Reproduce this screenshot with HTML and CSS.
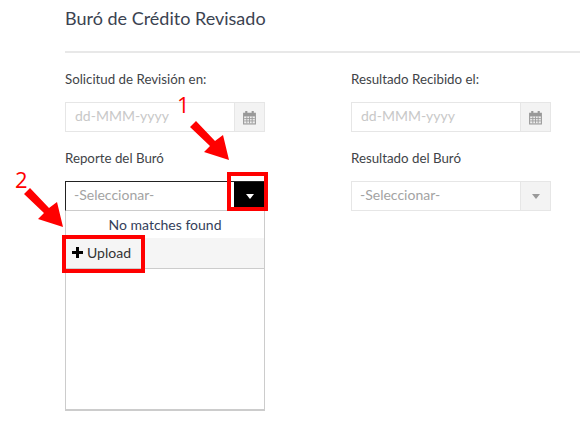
FILE: index.html
```html
<!DOCTYPE html>
<html>
<head>
  <meta charset="utf-8">
  <title>Buró de Crédito Revisado</title>
  <link rel="stylesheet" href="styles.css">
</head>
<body>
  <div class="page">
    <h1>Buró de Crédito Revisado</h1>
    <div class="form-grid">
      <div class="field">
        <label>Solicitud de Revisión en:</label>
        <div class="input-group">
          <span class="control placeholder">dd-MMM-yyyy</span>
          <span class="addon">
            <svg class="cal" viewBox="0 0 14 14"><path d="M1 2.5h2V1h2v1.5h4V1h2v1.500h2V13.500H1z" fill="#999"/><path d="M2 6h10v6.500H2z" fill="#eee"/><path d="M2 8h10M2 10.200h10M4.500 6v6.500M7 6v6.500M9.500 6v6.500" stroke="#999" stroke-width=".8" fill="none"/></svg>
          </span>
        </div>
      </div>
      <div class="field">
        <label>Resultado Recibido el:</label>
        <div class="input-group">
          <span class="control placeholder">dd-MMM-yyyy</span>
          <span class="addon">
            <svg class="cal" viewBox="0 0 14 14"><path d="M1 2.5h2V1h2v1.5h4V1h2v1.500h2V13.500H1z" fill="#999"/><path d="M2 6h10v6.500H2z" fill="#eee"/><path d="M2 8h10M2 10.200h10M4.500 6v6.500M7 6v6.500M9.500 6v6.500" stroke="#999" stroke-width=".8" fill="none"/></svg>
          </span>
        </div>
      </div>
      <div class="field">
        <label>Reporte del Buró</label>
        <div class="select-wrap">
          <div class="input-group open">
            <span class="control placeholder-dark">-Seleccionar-</span>
            <span class="addon black"><i class="caret white"></i></span>
          </div>
          <div class="dropdown">
            <div class="no-match">No matches found</div>
            <div class="upload">
              <svg class="plus" viewBox="0 0 11 11"><path d="M4 0h3v4h4v3H7v4H4V7H0V4h4z" fill="#000"/></svg>
              Upload
            </div>
          </div>
        </div>
      </div>
      <div class="field">
        <label>Resultado del Buró</label>
        <div class="input-group">
          <span class="control placeholder-dark">-Seleccionar-</span>
          <span class="addon"><i class="caret"></i></span>
        </div>
      </div>
    </div>
  </div>

  <!-- anotaciones en rojo sobre la captura -->
  <span class="num num-1">1</span>
  <span class="num num-2">2</span>
  <div class="red-box box-1"></div>
  <div class="red-box box-2"></div>
  <svg class="arrows" viewBox="0 0 580 436">
    <polygon points="190,127 196,121 215,141 223,135 229,160 204,152 210,146" fill="#f00"/>
    <polygon points="24,194 30,188 49,208 57,202 63,227 38,219 44,213" fill="#f00"/>
  </svg>
</body>
</html>
```

FILE: styles.css
```css
* {
  margin: 0;
  padding: 0;
  box-sizing: border-box;
}

body {
  font-family: 'Lato', 'Liberation Sans', sans-serif;
  background: #fff;
  color: #3b4351;
  width: 580px;
  height: 436px;
  overflow: hidden;
  position: relative;
}

.page {
  padding: 7px 0 0 65px;
}

h1 {
  font-size: 18px;
  font-weight: 400;
  line-height: 22px;
  height: 46px;
  border-bottom: 2px solid #e8e8e8;
  color: #3b4351;
}

.form-grid {
  display: grid;
  grid-template-columns: 200px 200px;
  column-gap: 86px;
  row-gap: 16px;
  padding-top: 16px;
}

label {
  display: block;
  font-size: 13.3px;
  line-height: 20px;
  margin-bottom: 13px;
  color: #3f4448;
}

.input-group {
  display: flex;
  height: 30px;
  border: 1px solid #e6e6e6;
}

.control {
  flex: 1;
  font-size: 14px;
  line-height: 26px;
  padding-left: 9px;
}

.placeholder {
  color: #c8c8c8;
}

.placeholder-dark {
  color: #a3a3a3;
  padding-left: 8px;
}

.addon {
  width: 30px;
  background: #f3f3f3;
  border-left: 1px solid #e6e6e6;
  display: flex;
  align-items: center;
  justify-content: center;
}

.cal {
  width: 15px;
  height: 15px;
}

.caret {
  width: 0;
  height: 0;
  border-left: 4px solid transparent;
  border-right: 4px solid transparent;
  border-top: 5px solid #999;
}

.caret.white {
  border-top-color: #fff;
}

.select-wrap {
  position: relative;
}

.input-group.open {
  border: 1px solid #222;
  border-bottom-color: #ccc;
}

.addon.black {
  background: #000;
  border-left: 1px solid #000;
  width: 30px;
}

.dropdown {
  position: absolute;
  top: 30px;
  left: 0;
  width: 200px;
  height: 200px;
  background: #fff;
  border: 1px solid #ccc;
  border-top: 0;
  border-bottom-width: 2px;
}

.no-match {
  text-align: center;
  font-size: 14px;
  line-height: 27px;
  color: #34405a;
}

.upload {
  display: flex;
  align-items: center;
  gap: 4px;
  background: #f5f5f5;
  height: 31px;
  padding: 0 0 2px 6px;
  font-size: 14px;
  color: #333;
  border-bottom: 1px solid #ccc;
}

.plus {
  width: 11px;
  height: 11px;
}

.red-box {
  position: absolute;
  border: 4px solid #f00;
}

.box-1 {
  left: 227px;
  top: 172px;
  width: 41px;
  height: 39px;
}

.box-2 {
  left: 62px;
  top: 235px;
  width: 83px;
  height: 38px;
}

.num {
  position: absolute;
  font-family: 'Open Sans', sans-serif;
  font-size: 22px;
  line-height: 26px;
  color: #f00;
}

.num-1 {
  left: 177px;
  top: 91px;
}

.num-2 {
  left: 15px;
  top: 166px;
}

.arrows {
  position: absolute;
  left: 0;
  top: 0;
  width: 580px;
  height: 436px;
  pointer-events: none;
}
```
